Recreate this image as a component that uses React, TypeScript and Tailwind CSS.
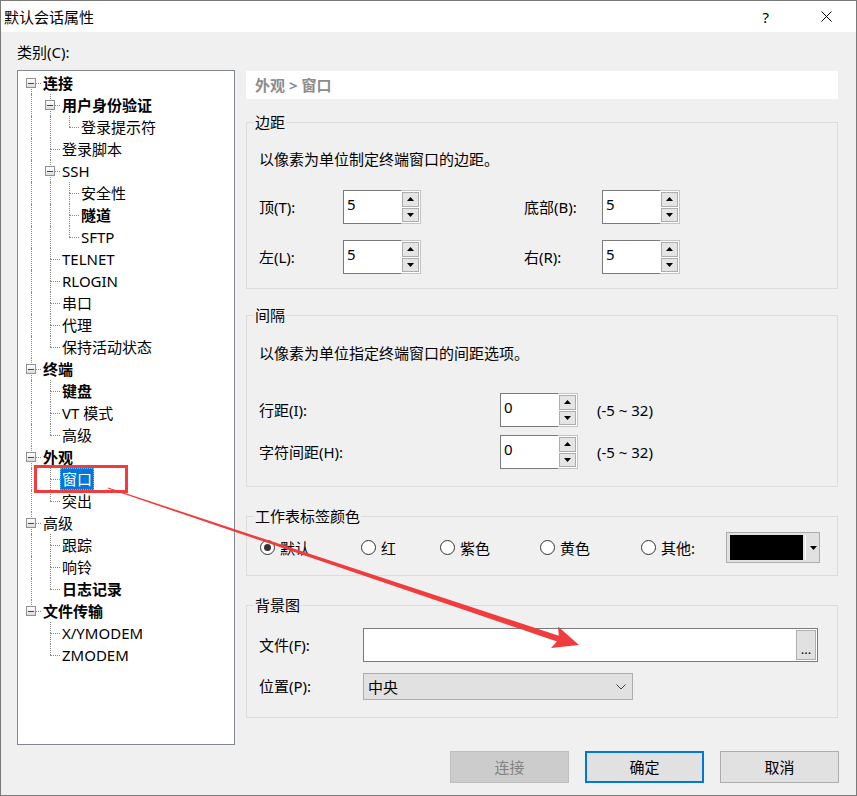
import React from 'react';

type Node = { label: string; bold?: boolean; selected?: boolean; children?: Node[] };

const TREE: Node[] = [
  {
    label: '连接',
    bold: true,
    children: [
      { label: '用户身份验证', bold: true, children: [{ label: '登录提示符' }] },
      { label: '登录脚本' },
      { label: 'SSH', children: [{ label: '安全性' }, { label: '隧道', bold: true }, { label: 'SFTP' }] },
      { label: 'TELNET' },
      { label: 'RLOGIN' },
      { label: '串口' },
      { label: '代理' },
      { label: '保持活动状态' },
    ],
  },
  { label: '终端', bold: true, children: [{ label: '键盘', bold: true }, { label: 'VT 模式' }, { label: '高级' }] },
  { label: '外观', bold: true, children: [{ label: '窗口', selected: true }, { label: '突出' }] },
  { label: '高级', children: [{ label: '跟踪' }, { label: '响铃' }, { label: '日志记录', bold: true }] },
  { label: '文件传输', bold: true, children: [{ label: 'X/YMODEM' }, { label: 'ZMODEM' }] },
];

type Row = { node: Node; level: number; cont: boolean[]; hasNext: boolean; isFirst: boolean };

function flatten(nodes: Node[], level: number, cont: boolean[], out: Row[]): Row[] {
  nodes.forEach((n, i) => {
    const hasNext = i < nodes.length - 1;
    out.push({ node: n, level, cont, hasNext, isFirst: level === 0 && i === 0 });
    if (n.children) flatten(n.children, level + 1, [...cont, hasNext], out);
  });
  return out;
}

const ROWS = flatten(TREE, 0, [], []);

function Expander() {
  return (
    <div className="absolute left-[4px] top-[6px] flex h-[10px] w-[10px] items-center justify-center border border-[#919191] bg-gradient-to-b from-white to-[#dcdcdc]">
      <div className="h-px w-[6px] bg-[#2b4a80]" />
    </div>
  );
}

function TreeRow({ r }: { r: Row }) {
  const line = 'border-dotted border-[#8a8a8a]';
  return (
    <div className="flex h-[22px]">
      {r.cont.map((c, i) => (
        <div key={i} className="relative w-[19px] shrink-0">
          {c && <div className={`absolute left-[9px] top-0 h-full border-l ${line}`} />}
        </div>
      ))}
      <div className="relative w-[19px] shrink-0">
        {!r.isFirst && <div className={`absolute left-[9px] top-0 h-[11px] border-l ${line}`} />}
        {r.hasNext && <div className={`absolute left-[9px] top-[11px] h-[11px] border-l ${line}`} />}
        <div className={`absolute left-[9px] top-[11px] w-[10px] border-t ${line}`} />
        {r.node.children && <Expander />}
      </div>
      <span
        className={`h-[22px] whitespace-nowrap border px-[1px] leading-[20px] ${
          r.node.selected ? 'border-dotted border-[#e8a040] bg-[#0078d7] text-white' : 'border-transparent text-black'
        } ${r.node.bold ? 'font-bold' : ''}`}
      >
        {r.node.label}
      </span>
    </div>
  );
}

const Up = () => (
  <svg width="7" height="4" viewBox="0 0 7 4">
    <polygon points="3.5,0 7,4 0,4" fill="#000" />
  </svg>
);
const Down = () => (
  <svg width="7" height="4" viewBox="0 0 7 4">
    <polygon points="0,0 7,0 3.5,4" fill="#000" />
  </svg>
);

function Spin({ value }: { value: string }) {
  return (
    <div className="flex h-[34px] w-[78px] shrink-0">
      <div className="h-full w-[58px] border-y border-l border-[#7a7a7a] bg-white pl-[3px] pt-[3px] leading-[20px]">{value}</div>
      <div className="flex h-full w-[20px] flex-col gap-[1px] border-y border-r border-[#c4c4c4] bg-white p-[1px]">
        <div className="flex flex-1 items-center justify-center border border-[#adadad] bg-[#e5e5e5]">
          <Up />
        </div>
        <div className="flex flex-1 items-center justify-center border border-[#adadad] bg-[#e5e5e5]">
          <Down />
        </div>
      </div>
    </div>
  );
}

function Group({ title, className, inner, children }: { title: string; className?: string; inner?: string; children: React.ReactNode }) {
  return (
    <fieldset className={`border border-[#dcdcdc] p-0 ${className ?? ''}`}>
      <legend className="ml-[7px] px-[1px] leading-[20px]">{title}</legend>
      <div className={inner ?? 'px-[12px]'}>{children}</div>
    </fieldset>
  );
}

function Radio({ label, checked, w }: { label: string; checked?: boolean; w: string }) {
  return (
    <div className={`flex items-center ${w}`}>
      <div className="flex h-[15px] w-[15px] items-center justify-center rounded-full border border-[#333] bg-white">
        {checked && <div className="h-[7px] w-[7px] rounded-full bg-[#333]" />}
      </div>
      <span className="ml-[5px] leading-[20px]">{label}</span>
    </div>
  );
}

export default function App() {
  return (
    <div className="relative flex h-[796px] w-[857px] flex-col border border-[#7a7a7a] bg-[#f0f0f0] font-['Noto_Sans','Noto_Sans_CJK_SC',sans-serif] text-[15px] text-black">
      {/* title bar */}
      <div className="flex h-[31px] shrink-0 items-center bg-white pl-[3px]">
        <span className="leading-[20px]">默认会话属性</span>
        <span className="ml-auto mr-[52px] leading-[20px]">?</span>
        <svg width="11" height="11" viewBox="0 0 11 11" className="mr-[24px]">
          <path d="M0.5 0.5 L10.5 10.5 M10.5 0.5 L0.5 10.5" stroke="#000" strokeWidth="1" />
        </svg>
      </div>

      {/* body */}
      <div className="flex flex-1 flex-col pl-[16px] pt-[10px]">
        <div className="h-[20px] leading-[20px]">类别(C):</div>
        <div className="mt-[8px] flex">
          {/* tree */}
          <div className="h-[675px] w-[218px] shrink-0 border border-[#828790] bg-white pl-[4px] pt-[1px]">
            {ROWS.map((r, i) => (
              <TreeRow key={i} r={r} />
            ))}
          </div>

          {/* right panel */}
          <div className="ml-[11px] flex w-[592px] flex-col">
            <div className="mt-[1px] flex h-[28px] items-center bg-white pl-[9px] font-bold text-[#8c8c8c]">外观 &gt; 窗口</div>

            <Group title="边距" className="mt-[13px] pb-[14px]">
              <div className="mt-[17px] h-[20px] leading-[20px]">以像素为单位制定终端窗口的边距。</div>
              <div className="mt-[21px] flex items-center">
                <span className="w-[84px]">顶(T):</span>
                <Spin value="5" />
                <span className="ml-[103px] w-[78px]">底部(B):</span>
                <Spin value="5" />
              </div>
              <div className="mt-[16px] flex items-center">
                <span className="w-[84px]">左(L):</span>
                <Spin value="5" />
                <span className="ml-[103px] w-[78px]">右(R):</span>
                <Spin value="5" />
              </div>
            </Group>

            <Group title="间隔" className="mt-[16px] pb-[17px]">
              <div className="mt-[18px] h-[20px] leading-[20px]">以像素为单位指定终端窗口的间距选项。</div>
              <div className="mt-[30px] flex items-center">
                <span className="w-[241px]">行距(I):</span>
                <Spin value="0" />
                <span className="ml-[19px]">(-5 ~ 32)</span>
              </div>
              <div className="mt-[8px] flex items-center">
                <span className="w-[241px]">字符间距(H):</span>
                <Spin value="0" />
                <span className="ml-[19px]">(-5 ~ 32)</span>
              </div>
            </Group>

            <Group title="工作表标签颜色" className="mt-[19px] pb-[12px]" inner="pl-[13px]">
              <div className="mt-[6px] flex h-[31px] items-center">
                <Radio label="默认" checked w="w-[101px]" />
                <Radio label="红" w="w-[79px]" />
                <Radio label="紫色" w="w-[100px]" />
                <Radio label="黄色" w="w-[101px]" />
                <Radio label="其他:" w="w-[85px]" />
                <div className="flex h-[31px] w-[94px] items-center border border-[#adadad] bg-[#e1e1e1] pl-[3px]">
                  <div className="h-[25px] w-[73px] bg-black" />
                  <div className="ml-[2px] h-[25px] w-px bg-white" />
                  <div className="ml-[4px]">
                    <Down />
                  </div>
                </div>
              </div>
            </Group>

            <Group title="背景图" className="mt-[19px] pb-[17px]">
              <div className="mt-[13px] flex items-center">
                <span className="w-[104px]">文件(F):</span>
                <div className="flex h-[34px] w-[455px] items-center justify-end border border-[#7a7a7a] bg-white pr-[1px]">
                  <div className="flex h-[30px] w-[20px] items-end justify-center border border-[#adadad] bg-[#e1e1e1] pb-[3px] text-[13px] leading-[13px]">
                    ...
                  </div>
                </div>
              </div>
              <div className="mt-[11px] flex items-center">
                <span className="w-[104px]">位置(P):</span>
                <div className="flex h-[27px] w-[270px] items-center border border-[#adadad] bg-[#e1e1e1] pl-[4px] pr-[6px]">
                  <span className="leading-[20px]">中央</span>
                  <svg width="10" height="6" viewBox="0 0 10 6" className="ml-auto">
                    <polyline points="0.5,0.5 5,5 9.5,0.5" fill="none" stroke="#444" strokeWidth="1" />
                  </svg>
                </div>
              </div>
            </Group>
          </div>
        </div>

        {/* buttons */}
        <div className="mt-[6px] flex justify-end gap-[16px] pr-[17px]">
          <div className="flex h-[32px] w-[119px] items-center justify-center border border-[#bfbfbf] bg-[#cccccc] text-[#838383]">连接</div>
          <div className="flex h-[32px] w-[119px] items-center justify-center border-2 border-[#0078d7] bg-[#e1e1e1]">确定</div>
          <div className="flex h-[32px] w-[119px] items-center justify-center border border-[#adadad] bg-[#e1e1e1]">取消</div>
        </div>
      </div>

      {/* annotation overlays */}
      <div className="pointer-events-none absolute left-[33px] top-[464px] h-[28px] w-[94px] border-[3px] border-[#f03c3c]" />
      <svg className="pointer-events-none absolute left-[-1px] top-[-1px]" width="857" height="796" viewBox="0 0 857 796">
        <polygon
          points="108.2,487.5 107.8,488.5 557.0,641.5 551.0,648.0 579,645 558.0,626.5 558.8,635.8"
          fill="#f03c3c"
        />
      </svg>
    </div>
  );
}
